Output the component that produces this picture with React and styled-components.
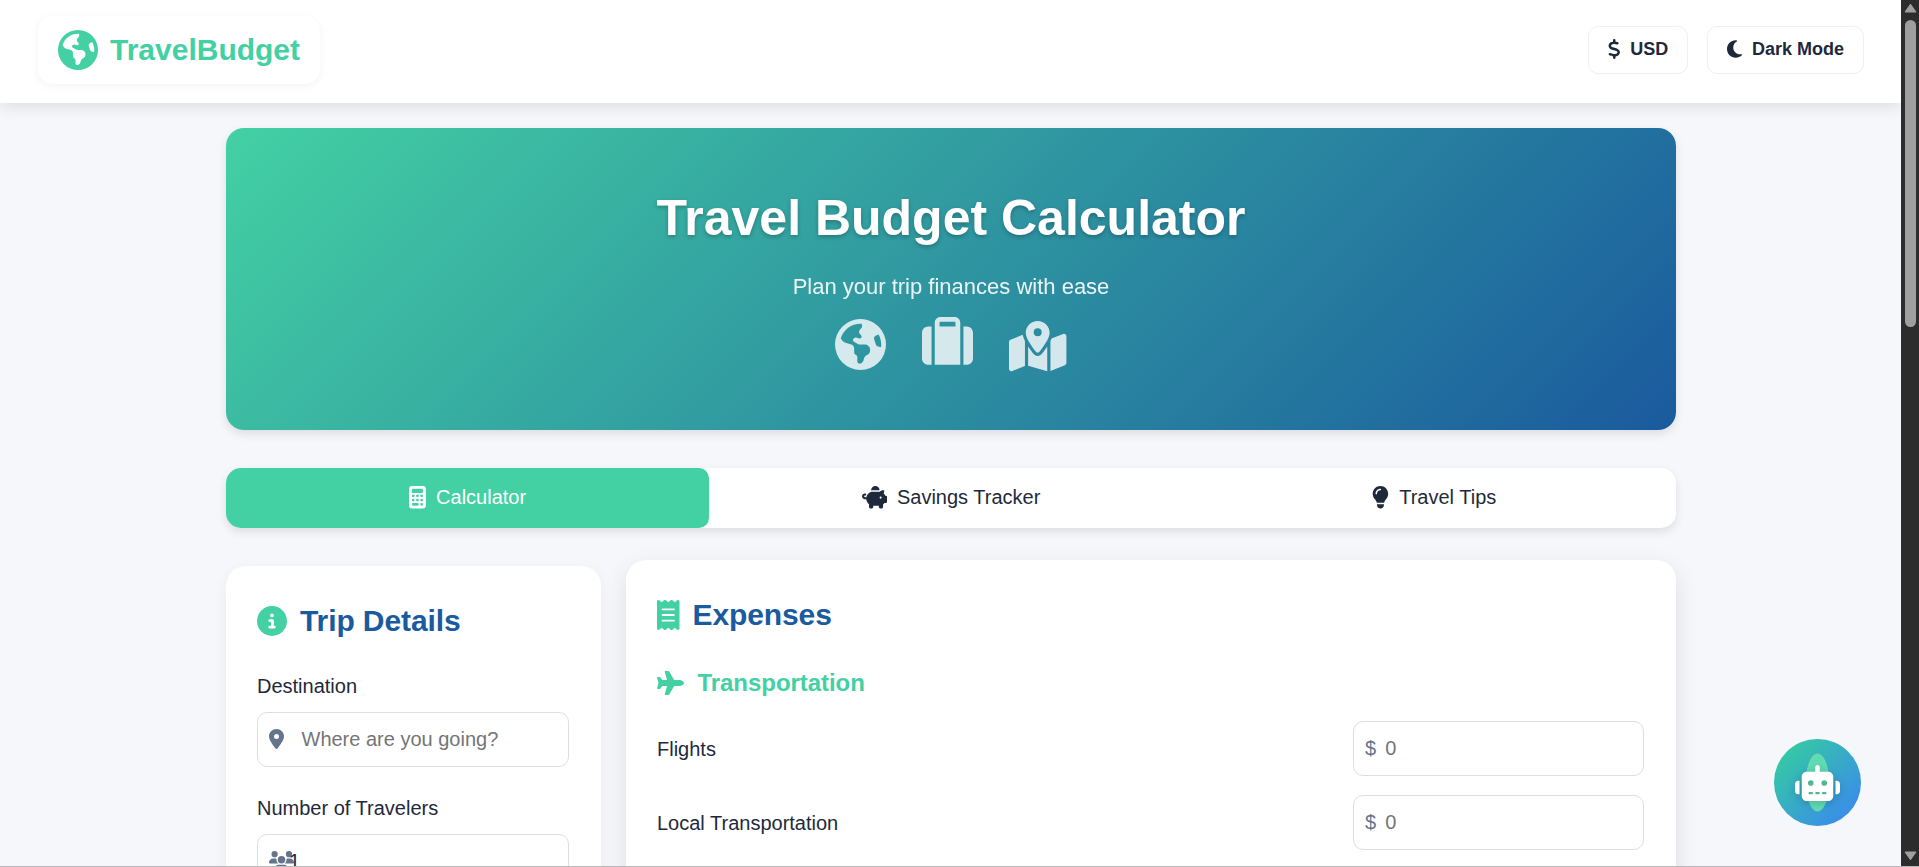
import React from 'react';
import styled, { createGlobalStyle, css } from 'styled-components';
import {
  FaEarthAmericas, FaDollarSign, FaMoon, FaSuitcase, FaMapLocationDot, FaCalculator,
  FaPiggyBank, FaLightbulb, FaCircleInfo, FaLocationDot, FaUsers, FaReceipt, FaPlane, FaRobot,
} from 'react-icons/fa6';

const green = '#43d0a3';
const blue = '#1a5a9e';
const ink = '#1e293b';
const muted = '#64748b';

const GlobalStyle = createGlobalStyle`
  * { box-sizing: border-box; margin: 0; padding: 0; }
  html, body { overflow: hidden; }
  body { background: #f5f7fb; color: ${ink}; font: 20px/1.6 "Liberation Sans", Arial, sans-serif; }
  svg { display: block; flex: none; }
`;

/* Icon sized by its height; $units is the width of its 512-unit-high view box. */
const Glyph = styled.span`
  display: block;
  flex: none;
  margin-top: ${p => p.$drop || 0}px;
  svg {
    height: ${p => p.$size}px;
    width: ${p => (p.$size * (p.$units || 512)) / 512}px;
  }
`;

const Screen = styled.div`
  display: flex;
  height: 867px;
  overflow: hidden;
  border-bottom: 1px solid #b9b9b9;
`;

const Page = styled.div`
  position: relative;
  width: 1901px;
  height: 866px;
  overflow: hidden;
`;

const Header = styled.header`
  display: flex;
  align-items: center;
  justify-content: space-between;
  position: relative;
  z-index: 2;
  height: 103px;
  padding: 0 37px 3px 38px;
  background: #fff;
  box-shadow: 0 4px 15px rgba(0, 0, 0, 0.1);
`;

const Logo = styled.div`
  display: flex;
  align-items: center;
  gap: 12.5px;
  height: 68px;
  width: 282px;
  padding: 0 19.5px;
  border-radius: 15px;
  background: #fff;
  box-shadow: 0 2px 10px rgba(0, 0, 0, 0.05);
  color: ${green};
  font-size: 30px;
  font-weight: 700;
  white-space: nowrap;
`;

const Actions = styled.div`
  display: flex;
  gap: 19px;
  padding-bottom: 1px;
`;

const ActionButton = styled.button`
  display: flex;
  align-items: center;
  justify-content: center;
  gap: 10px;
  width: ${p => p.$width}px;
  height: 48px;
  border: 1px solid #eef0f2;
  border-radius: 10px;
  background: #fff;
  color: ${ink};
  font: 700 18px "Liberation Sans", Arial, sans-serif;
  padding-bottom: 1px;
`;

const Main = styled.main`
  width: 1450px;
  margin: 25px 0 0 226px;
`;

const Hero = styled.section`
  display: flex;
  flex-direction: column;
  align-items: center;
  height: 302px;
  padding-top: 57px;
  border-radius: 18px;
  background: linear-gradient(135deg, ${green}, ${blue});
  box-shadow: 0 4px 10px rgba(0, 0, 0, 0.1);
  color: #fff;
`;

const HeroTitle = styled.h1`
  font-size: 50px;
  line-height: 66px;
  text-shadow: 0 2px 4px rgba(0, 0, 0, 0.25);
`;

const HeroText = styled.p`
  margin-top: 19px;
  font-size: 22px;
  line-height: 34px;
  opacity: 0.9;
`;

const HeroIcons = styled.div`
  display: flex;
  align-items: flex-start;
  gap: 36px;
  margin-top: 13px;
  opacity: 0.8;
`;

const Tabs = styled.nav`
  display: flex;
  height: 60px;
  margin-top: 38px;
  border-radius: 15px;
  background: #fff;
  box-shadow: 0 4px 10px rgba(0, 0, 0, 0.1);
`;

const Tab = styled.button`
  display: flex;
  flex: 1;
  align-items: center;
  justify-content: center;
  gap: 10px;
  padding-bottom: 1px;
  border: 0;
  background: none;
  color: ${ink};
  font: 20px "Liberation Sans", Arial, sans-serif;
  ${p => p.$active && css`
    border-radius: 15px 10px 10px 15px;
    background: ${green};
    color: #fff;
  `}
`;

const Columns = styled.div`
  display: grid;
  grid-template-columns: 375px 1050px;
  gap: 25px;
  margin-top: 32px;
  align-items: start;
`;

const Card = styled.section`
  height: 500px;
  margin-top: ${p => p.$offset || 0}px;
  padding: 29px 32px 29px 31px;
  border-radius: 20px;
  background: #fff;
  box-shadow: ${p => p.$raised ? '0 8px 25px rgba(0, 0, 0, 0.1)' : '0 4px 15px rgba(0, 0, 0, 0.05)'};
`;

const CardTitle = styled.h2`
  display: flex;
  align-items: center;
  gap: 13px;
  height: 52px;
  color: ${blue};
  font-size: 30px;
  letter-spacing: -0.1px;
  svg { color: ${green}; }
`;

const GroupTitle = styled.h3`
  display: flex;
  align-items: center;
  gap: 13.5px;
  height: 38px;
  margin: 23px 0 19px;
  color: ${green};
  font-size: 24px;
  letter-spacing: -0.05px;
`;

const Field = styled.div`
  margin-top: ${p => p.$top}px;
`;

const Label = styled.label`
  display: block;
  height: 31px;
  line-height: 31px;
`;

const InputBox = styled.div`
  display: flex;
  align-items: center;
  height: 55px;
  margin-top: ${p => p.$top || 0}px;
  width: ${p => p.$width}px;
  padding: 0 0 2px 11px;
  border: 1px solid #dedede;
  border-radius: 10px;
  color: ${muted};
`;

const InputText = styled.span`
  margin-left: ${p => p.$gap}px;
  color: ${p => p.$filled ? ink : '#757575'};
`;

const ExpenseRow = styled.div`
  display: flex;
  align-items: center;
  justify-content: space-between;
  height: 55px;
  margin-bottom: 19px;
`;

const ChatButton = styled.button`
  position: absolute;
  top: 739px;
  left: 1774px;
  z-index: 3;
  display: grid;
  place-items: center;
  width: 87px;
  height: 87px;
  border: 0;
  border-radius: 50%;
  background:
    radial-gradient(ellipse 12px 29.5px at 50% 50%, #62dbb3 96%, transparent 100%),
    linear-gradient(135deg, #34d399, #3b82f6);
  color: #fff;
  svg { filter: drop-shadow(0 2px 4px rgba(0, 0, 0, 0.2)); }
`;

const Scrollbar = styled.div`
  display: flex;
  flex-direction: column;
  align-items: center;
  width: 18px;
  height: 866px;
  padding: 3px 0 5px 1px;
  background: #2c2c2c;
`;

const Thumb = styled.div`
  width: 11px;
  height: 307px;
  margin: 7px 0 auto;
  border-radius: 6px;
  background: #9f9f9f;
`;

const Arrow = ({ down }) => (
  <svg width="13" height="10" viewBox="0 0 13 10">
    <path
      d="M6.5 1.2 12 9H1Z"
      fill="#9f9f9f"
      stroke="#9f9f9f"
      strokeLinejoin="round"
      transform={down ? 'rotate(180 6.5 5)' : undefined}
    />
  </svg>
);

export default function App() {
  return (
    <Screen>
      <GlobalStyle />
      <Page>
        <Header>
          <Logo><Glyph $size={40}><FaEarthAmericas /></Glyph>TravelBudget</Logo>
          <Actions>
            <ActionButton $width={100}><Glyph $size={20} $units={320}><FaDollarSign /></Glyph>USD</ActionButton>
            <ActionButton $width={157}><Glyph $size={20} $units={384}><FaMoon /></Glyph>Dark Mode</ActionButton>
          </Actions>
        </Header>
        <Main>
          <Hero>
            <HeroTitle>Travel Budget Calculator</HeroTitle>
            <HeroText>Plan your trip finances with ease</HeroText>
            <HeroIcons>
              <Glyph $size={51} $drop={2.3}><FaEarthAmericas /></Glyph>
              <Glyph $size={51} $drop={0.3}><FaSuitcase /></Glyph>
              <Glyph $size={51} $units={576} $drop={3.8}><FaMapLocationDot /></Glyph>
            </HeroIcons>
          </Hero>
          <Tabs>
            <Tab $active><Glyph $size={22.5} $units={384}><FaCalculator /></Glyph>Calculator</Tab>
            <Tab><Glyph $size={22.5} $units={576}><FaPiggyBank /></Glyph>Savings Tracker</Tab>
            <Tab><Glyph $size={22.5} $units={384}><FaLightbulb /></Glyph>Travel Tips</Tab>
          </Tabs>
          <Columns>
            <Card $offset={6}>
              <CardTitle><Glyph $size={30}><FaCircleInfo /></Glyph>Trip Details</CardTitle>
              <Field $top={24}>
                <Label>Destination</Label>
                <InputBox $top={10} $width={312}>
                  <Glyph $size={20} $units={384}><FaLocationDot /></Glyph>
                  <InputText $gap={17.5}>Where are you going?</InputText>
                </InputBox>
              </Field>
              <Field $top={26}>
                <Label>Number of Travelers</Label>
                <InputBox $top={10} $width={312}>
                  <Glyph $size={20} $units={640}><FaUsers /></Glyph>
                  <InputText $gap={-5} $filled>1</InputText>
                </InputBox>
              </Field>
            </Card>
            <Card $raised>
              <CardTitle><Glyph $size={30} $units={384}><FaReceipt /></Glyph>Expenses</CardTitle>
              <GroupTitle><Glyph $size={24} $units={576}><FaPlane /></Glyph>Transportation</GroupTitle>
              {['Flights', 'Local Transportation'].map(name => (
                <ExpenseRow key={name}>
                  {name}
                  <InputBox $width={291}>$<InputText $gap={9}>0</InputText></InputBox>
                </ExpenseRow>
              ))}
            </Card>
          </Columns>
        </Main>
        <ChatButton><Glyph $size={36} $units={640}><FaRobot /></Glyph></ChatButton>
      </Page>
      <Scrollbar><Arrow /><Thumb /><Arrow down /></Scrollbar>
    </Screen>
  );
}
